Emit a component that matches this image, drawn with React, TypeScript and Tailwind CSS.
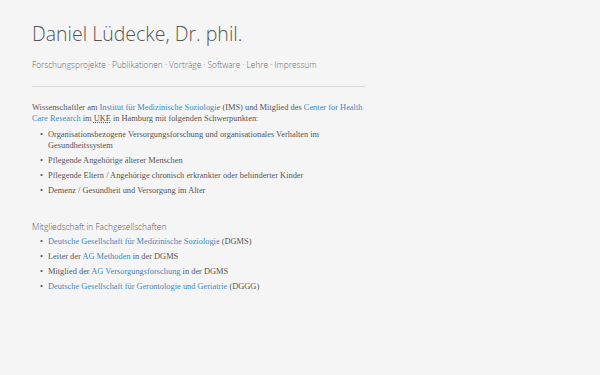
import React from 'react';

const serif = "font-['Liberation_Serif',serif]";
const sans = "font-['Open_Sans',sans-serif]";

const Link = ({ children }: { children: React.ReactNode }) => (
  <a className="text-[#4089bd]">{children}</a>
);

const Bullet = ({ children }: { children: React.ReactNode }) => (
  <li className="flex gap-[5px]">
    <span className="w-[3px] shrink-0 text-center">•</span>
    <span>{children}</span>
  </li>
);

export default function App() {
  return (
    <div className="min-h-[375px] bg-[#f5f5f5] text-[#555]">
      <div className="w-[333px] pl-[32px] pt-[21px] box-content">
        <h1 className={`${sans} font-light text-[19.5px] leading-[26px] text-[#555]`}>
          Daniel Lüdecke, Dr. phil.
        </h1>

        <nav className={`${sans} font-light mt-[12px] text-[8.3px] leading-[12px] text-[#666]`}>
          Forschungsprojekte · Publikationen · Vorträge · Software · Lehre · Impressum
        </nav>

        <div className="mt-[15px] border-t border-[#dcdcdc]" />

        <div className={`${serif} mt-[15px] text-[8.4px] leading-[11px] text-[#555]`}>
          <p>
            Wissenschaftler am <Link>Institut für Medizinische Soziologie</Link> (IMS) und Mitglied des{' '}
            <Link>Center for Health Care Research</Link> im{' '}
            <abbr className="underline decoration-dotted">UKE</abbr> in Hamburg mit folgenden Schwerpunkten:
          </p>

          <ul className="mt-[6px] pl-[8px] flex flex-col gap-[4.5px] leading-[10.5px]">
            <Bullet>
              Organisationsbezogene Versorgungsforschung und organisationales Verhalten im Gesundheitssystem
            </Bullet>
            <Bullet>Pflegende Angehörige älterer Menschen</Bullet>
            <Bullet>Pflegende Eltern / Angehörige chronisch erkrankter oder behinderter Kinder</Bullet>
            <Bullet>Demenz / Gesundheit und Versorgung im Alter</Bullet>
          </ul>
        </div>

        <h2 className={`${sans} font-light mt-[25px] text-[8.4px] leading-[12px] text-[#555]`}>
          Mitgliedschaft in Fachgesellschaften
        </h2>

        <ul className={`${serif} mt-[4px] pl-[8px] flex flex-col gap-[4.5px] text-[8.4px] leading-[10.5px] text-[#555]`}>
          <Bullet>
            <Link>Deutsche Gesellschaft für Medizinische Soziologie</Link> (DGMS)
          </Bullet>
          <Bullet>
            Leiter der <Link>AG Methoden</Link> in der DGMS
          </Bullet>
          <Bullet>
            Mitglied der <Link>AG Versorgungsforschung</Link> in der DGMS
          </Bullet>
          <Bullet>
            <Link>Deutsche Gesellschaft für Gerontologie und Geriatrie</Link> (DGGG)
          </Bullet>
        </ul>
      </div>
    </div>
  );
}
